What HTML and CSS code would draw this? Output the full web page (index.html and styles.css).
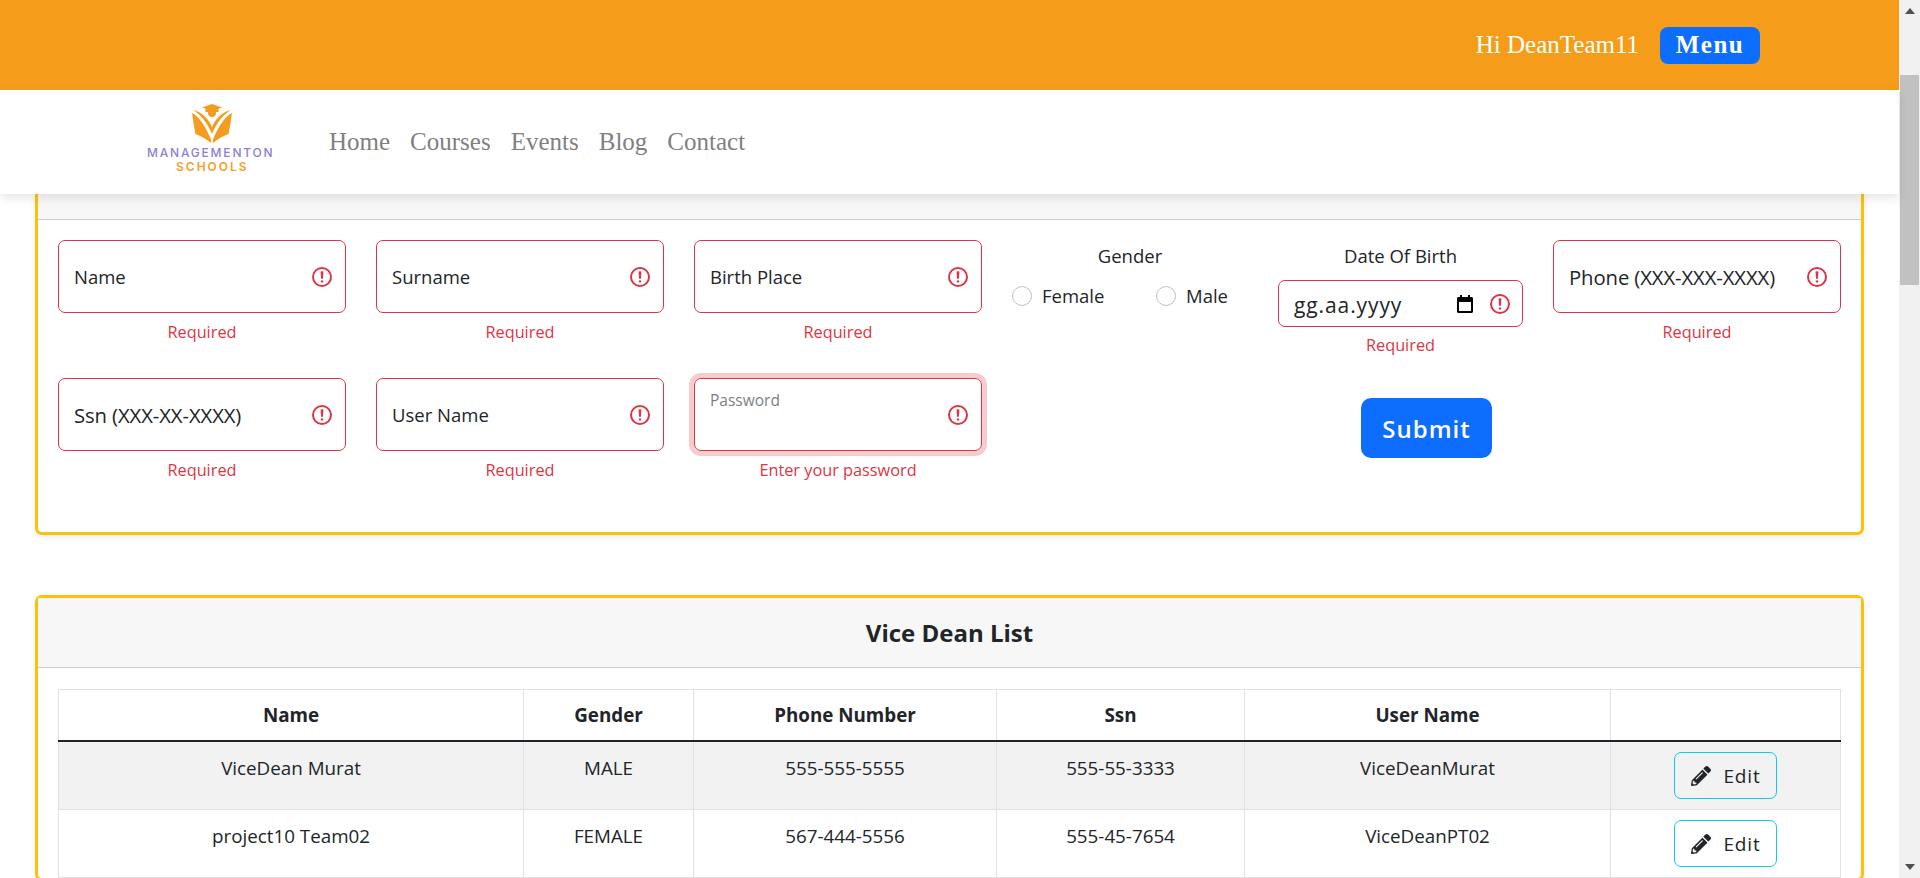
FILE: index.html
```html
<!DOCTYPE html>
<html lang="en">
<head>
    <meta charset="UTF-8">
    <meta name="viewport" content="width=device-width, initial-scale=1.0">
    <title>Vice Dean Management</title>
    <link rel="stylesheet" href="styles.css">
</head>
<body>
    <svg class="icon-defs" width="0" height="0">
        <symbol id="alert" viewBox="0 0 12 12">
            <circle cx="6" cy="6" r="4.5" fill="none" stroke="#dc3545"/>
            <path d="M5.8 3.6h.4L6 6.5z" fill="none" stroke="#dc3545" stroke-linejoin="round"/>
            <circle cx="6" cy="8.2" r=".6" fill="#dc3545"/>
        </symbol>
        <symbol id="pencil" viewBox="0 0 512 512">
            <path d="M497.9 142.1l-46.1 46.1c-4.7 4.7-12.3 4.7-17 0l-111-111c-4.7-4.7-4.7-12.3 0-17l46.1-46.1c18.7-18.7 49.1-18.7 67.9 0l60.1 60.1c18.8 18.7 18.8 49.1 0 67.9zM284.2 99.8L21.6 362.4.4 483.9c-2.9 16.4 11.4 30.6 27.8 27.8l121.5-21.3 262.6-262.6c4.7-4.7 4.7-12.3 0-17l-111-111c-4.8-4.7-12.4-4.7-17.1 0zM124.1 339.9c-5.5-5.5-5.5-14.3 0-19.8l154-154c5.5-5.5 14.3-5.5 19.8 0s5.5 14.3 0 19.8l-154 154c-5.5 5.5-14.3 5.5-19.8 0zM88 424h48v36.3l-64.5 11.3-31.1-31.1L51.7 376H88v48z"/>
        </symbol>
    </svg>

    <div class="page">
        <!-- Top bar -->
        <header class="topbar">
            <span class="greeting">Hi DeanTeam11</span>
            <button class="menu-button">Menu</button>
        </header>

        <!-- Logo and links -->
        <nav class="navbar">
            <a class="logo" href="#">
                <svg class="logo-mark" viewBox="0 0 40 40">
                    <path fill="#f39c1f" d="M20 0l10 3.500-3.500 1.300V8h-13V4.800L10 3.500z"/>
                    <circle cx="20" cy="9" r="4" fill="#f39c1f"/>
                    <path fill="#f39c1f" d="M1 6C10 8 16 14 20 23 24 14 30 8 39 6 32 10 25 18 20 30 15 18 8 10 1 6z"/>
                    <path fill="#f39c1f" d="M0 9c7 3 14 14 19.200 27v3C14 35 9 32 3.500 30 2 23 1 16 0 9z"/>
                    <path fill="#f39c1f" d="M40 9c-7 3-14 14-19.200 27v3C26 35 31 32 36.500 30 38 23 39 16 40 9z"/>
                </svg>
                <span class="logo-title">MANAGEMENTON</span>
                <span class="logo-sub">SCHOOLS</span>
            </a>
            <a class="nav-link" href="#">Home</a>
            <a class="nav-link" href="#">Courses</a>
            <a class="nav-link" href="#">Events</a>
            <a class="nav-link" href="#">Blog</a>
            <a class="nav-link" href="#">Contact</a>
        </nav>

        <main class="content">
            <!-- Add form, scrolled under the navbar -->
            <section class="card card-scrolled">
                <div class="card-header"></div>
                <form class="form-grid">
                    <div class="form-col">
                        <label class="field"><span>Name</span><svg class="alert-icon"><use href="#alert"/></svg></label>
                        <p class="feedback">Required</p>
                    </div>
                    <div class="form-col">
                        <label class="field"><span>Surname</span><svg class="alert-icon"><use href="#alert"/></svg></label>
                        <p class="feedback">Required</p>
                    </div>
                    <div class="form-col">
                        <label class="field"><span>Birth Place</span><svg class="alert-icon"><use href="#alert"/></svg></label>
                        <p class="feedback">Required</p>
                    </div>
                    <div class="form-col gender">
                        <p class="col-title">Gender</p>
                        <div class="radio-row">
                            <label class="radio"><span class="radio-dot"></span>Female</label>
                            <label class="radio"><span class="radio-dot"></span>Male</label>
                        </div>
                    </div>
                    <div class="form-col birth">
                        <p class="col-title">Date Of Birth</p>
                        <label class="date-field">
                            <span>gg.aa.yyyy</span>
                            <svg class="calendar" viewBox="0 0 16 18"><path d="M3 0h2v2h6V0h2v2h1.500c.8 0 1.500.7 1.500 1.500v13c0 .8-.7 1.500-1.500 1.500h-13C.7 18 0 17.300 0 16.500v-13C0 2.700.7 2 1.500 2H3zM2 7v9h12V7z"/></svg>
                            <svg class="alert-icon"><use href="#alert"/></svg>
                        </label>
                        <p class="feedback">Required</p>
                    </div>
                    <div class="form-col">
                        <label class="field"><span class="wide-text">Phone (XXX-XXX-XXXX)</span><svg class="alert-icon"><use href="#alert"/></svg></label>
                        <p class="feedback">Required</p>
                    </div>
                    <div class="form-col">
                        <label class="field"><span class="wide-text">Ssn (XXX-XX-XXXX)</span><svg class="alert-icon"><use href="#alert"/></svg></label>
                        <p class="feedback">Required</p>
                    </div>
                    <div class="form-col">
                        <label class="field"><span>User Name</span><svg class="alert-icon"><use href="#alert"/></svg></label>
                        <p class="feedback">Required</p>
                    </div>
                    <div class="form-col">
                        <label class="field field-focus"><span>Password</span><svg class="alert-icon"><use href="#alert"/></svg></label>
                        <p class="feedback">Enter your password</p>
                    </div>
                    <div class="submit-col">
                        <button class="submit-button" type="button">Submit</button>
                    </div>
                </form>
            </section>

            <!-- List -->
            <section class="card">
                <h2 class="card-header card-title">Vice Dean List</h2>
                <div class="card-body">
                    <table class="list-table">
                        <colgroup>
                            <col class="col-name">
                            <col class="col-gender">
                            <col class="col-phone">
                            <col class="col-ssn">
                            <col class="col-user">
                            <col>
                        </colgroup>
                        <thead>
                            <tr>
                                <th>Name</th>
                                <th>Gender</th>
                                <th>Phone Number</th>
                                <th>Ssn</th>
                                <th>User Name</th>
                                <th></th>
                            </tr>
                        </thead>
                        <tbody>
                            <tr class="striped">
                                <td>ViceDean Murat</td>
                                <td>MALE</td>
                                <td>555-555-5555</td>
                                <td>555-55-3333</td>
                                <td>ViceDeanMurat</td>
                                <td class="action"><button class="edit-button"><svg class="pencil"><use href="#pencil"/></svg>Edit</button></td>
                            </tr>
                            <tr>
                                <td>project10 Team02</td>
                                <td>FEMALE</td>
                                <td>567-444-5556</td>
                                <td>555-45-7654</td>
                                <td>ViceDeanPT02</td>
                                <td class="action"><button class="edit-button"><svg class="pencil"><use href="#pencil"/></svg>Edit</button></td>
                            </tr>
                        </tbody>
                    </table>
                </div>
            </section>
        </main>
    </div>

    <!-- Window scrollbar -->
    <div class="scrollbar">
        <span class="arrow-up"></span>
        <span class="thumb"></span>
        <span class="arrow-down"></span>
    </div>
</body>
</html>
```

FILE: styles.css
```css
* {
    box-sizing: border-box;
}

body {
    margin: 0;
    height: 100vh;
    display: flex;
    overflow: hidden;
    font-family: "Open Sans", "Noto Sans", sans-serif;
    font-size: 18.5px;
    color: #212529;
    background-color: #fff;
}

p {
    margin: 0;
}

.icon-defs {
    position: absolute;
}

.page {
    flex: 1;
    min-width: 0;
    display: flex;
    flex-direction: column;
}

/* Top bar */
.topbar {
    height: 90px;
    flex-shrink: 0;
    display: flex;
    align-items: center;
    justify-content: flex-end;
    gap: 21px;
    padding: 0 139px 0 0;
    background-color: #f59d1a;
    font-family: "Liberation Serif", serif;
    color: #fff;
}

.greeting {
    font-size: 25px;
}

.menu-button {
    width: 100px;
    height: 37px;
    padding: 0;
    border: none;
    border-radius: 8px;
    background-color: #0d6efd;
    color: #fff;
    font-family: "Liberation Serif", serif;
    font-size: 25px;
    font-weight: bold;
    letter-spacing: 1.500px;
}

/* Navbar */
.navbar {
    height: 104px;
    flex-shrink: 0;
    display: flex;
    align-items: center;
    padding-left: 147px;
    background-color: #fff;
    box-shadow: 0 4px 10px rgba(0, 0, 0, 0.1);
    position: relative;
    z-index: 2;
}

.logo {
    width: 172px;
    margin-bottom: 7px;
    display: flex;
    flex-direction: column;
    text-decoration: none;
    font-family: "Inter", sans-serif;
    font-weight: 500;
    line-height: 14px;
}

.logo-mark {
    width: 40px;
    height: 40px;
    margin-left: 45px;
    margin-bottom: 2px;
}

.logo-title {
    font-size: 12px;
    letter-spacing: 1.800px;
    color: #8a7fd2;
}

.logo-sub {
    font-size: 12px;
    font-weight: 600;
    letter-spacing: 2px;
    margin-left: 29px;
    color: #f5a02a;
}

.nav-link {
    padding: 0 10px;
    font-family: "Liberation Serif", serif;
    font-size: 25px;
    color: #808080;
    text-decoration: none;
}

/* Cards */
.content {
    flex: 1;
    min-height: 0;
    overflow: hidden;
    padding: 0 35px;
}

.card {
    border: 3px solid #ffc107;
    border-radius: 7px;
    background-color: #fff;
    box-shadow: 0 2px 6px rgba(0, 0, 0, 0.08);
    margin-bottom: 60px;
}

.card-scrolled {
    border-top: none;
    border-top-left-radius: 0;
    border-top-right-radius: 0;
}

.card-header {
    height: 26px;
    margin: 0;
    background-color: #f7f7f7;
    border-bottom: 1px solid #ccc;
}

.card-title {
    height: 70px;
    line-height: 69px;
    text-align: center;
    font-size: 24px;
    font-weight: 700;
}

.card-body {
    padding: 21px 20px 0;
}

/* Form */
.form-grid {
    display: grid;
    grid-template-columns: 1fr 1fr 1fr 236px 245px 1fr;
    column-gap: 30px;
    row-gap: 20px;
    padding: 20px 20px 49px;
}

.form-col {
    text-align: center;
    min-width: 0;
}

.field {
    height: 73px;
    display: flex;
    align-items: center;
    justify-content: space-between;
    padding: 0 11px 0 15px;
    border: 1px solid #dc3545;
    border-radius: 7px;
    text-align: left;
}

.field span {
    white-space: nowrap;
}

.field .wide-text {
    font-size: 20.300px;
    letter-spacing: -0.100px;
}

.field-focus {
    box-shadow: 0 0 0 5px rgba(220, 53, 69, 0.25);
}

.field-focus span {
    align-self: flex-start;
    margin-top: 10px;
    font-size: 15.500px;
    color: #7a7f85;
}

.alert-icon {
    width: 24px;
    height: 24px;
    flex-shrink: 0;
}

.feedback {
    margin-top: 6px;
    font-size: 16.300px;
    line-height: 26px;
    color: #dc3545;
}

.birth .feedback {
    margin-top: 5px;
}

.col-title {
    padding-top: 1px;
    line-height: 29px;
}

.radio-row {
    display: flex;
    justify-content: space-between;
    padding-right: 20px;
    margin-top: 13px;
}

.radio {
    display: flex;
    align-items: center;
    gap: 10px;
}

.radio-dot {
    width: 20px;
    height: 20px;
    border: 1px solid #bfbfbf;
    border-radius: 50%;
}

.date-field {
    height: 47px;
    margin-top: 10px;
    display: flex;
    align-items: center;
    padding: 0 10px 0 15px;
    border: 1px solid #dc3545;
    border-radius: 7px;
}

.date-field span {
    flex: 1;
    text-align: left;
    padding-top: 2px;
    font-size: 21px;
    letter-spacing: 0.900px;
}

.calendar {
    width: 16px;
    height: 18px;
    margin-right: 15px;
}

.submit-col {
    grid-column: 4 / 7;
    display: flex;
    justify-content: center;
    padding-top: 20px;
}

.submit-button {
    width: 131px;
    height: 60px;
    border: none;
    border-radius: 10px;
    background-color: #0d6efd;
    color: #fff;
    font-family: inherit;
    font-size: 24px;
    font-weight: 600;
    letter-spacing: 1px;
}

/* Table */
.list-table {
    width: 100%;
    table-layout: fixed;
    border-collapse: collapse;
    text-align: center;
    font-size: 18.800px;
}

.col-name {
    width: 465px;
}

.col-gender {
    width: 170px;
}

.col-phone {
    width: 303px;
}

.col-ssn {
    width: 248px;
}

.col-user {
    width: 366px;
}

.list-table th,
.list-table td {
    border: 1px solid #dee2e6;
    padding: 13px 10px;
    font-weight: 400;
    vertical-align: top;
    line-height: 26px;
}

.list-table th {
    padding: 12px 10px;
    font-weight: 700;
    border-bottom: 2px solid #212529;
}

.striped {
    background-color: #f2f2f2;
}

.list-table td.action {
    padding: 10px;
}

.edit-button {
    width: 103px;
    height: 47px;
    display: inline-flex;
    align-items: center;
    justify-content: center;
    gap: 13px;
    border: 1px solid #0dcaf0;
    border-radius: 7px;
    background: transparent;
    color: #212529;
    font-family: inherit;
    font-size: 19px;
    letter-spacing: 0.800px;
}

.pencil {
    width: 20px;
    height: 20px;
    fill: #212529;
}

/* Scrollbar */
.scrollbar {
    width: 21px;
    flex-shrink: 0;
    display: flex;
    flex-direction: column;
    align-items: center;
    padding-top: 8px;
    background-color: #f1f1f1;
}

.arrow-up {
    border: 5px solid transparent;
    border-top: none;
    border-bottom: 6px solid #505050;
}

.thumb {
    width: 19px;
    height: 210px;
    margin-top: 61px;
    background-color: #c1c1c1;
}

.arrow-down {
    margin-top: auto;
    margin-bottom: 8px;
    border: 5px solid transparent;
    border-bottom: none;
    border-top: 6px solid #505050;
}
```
